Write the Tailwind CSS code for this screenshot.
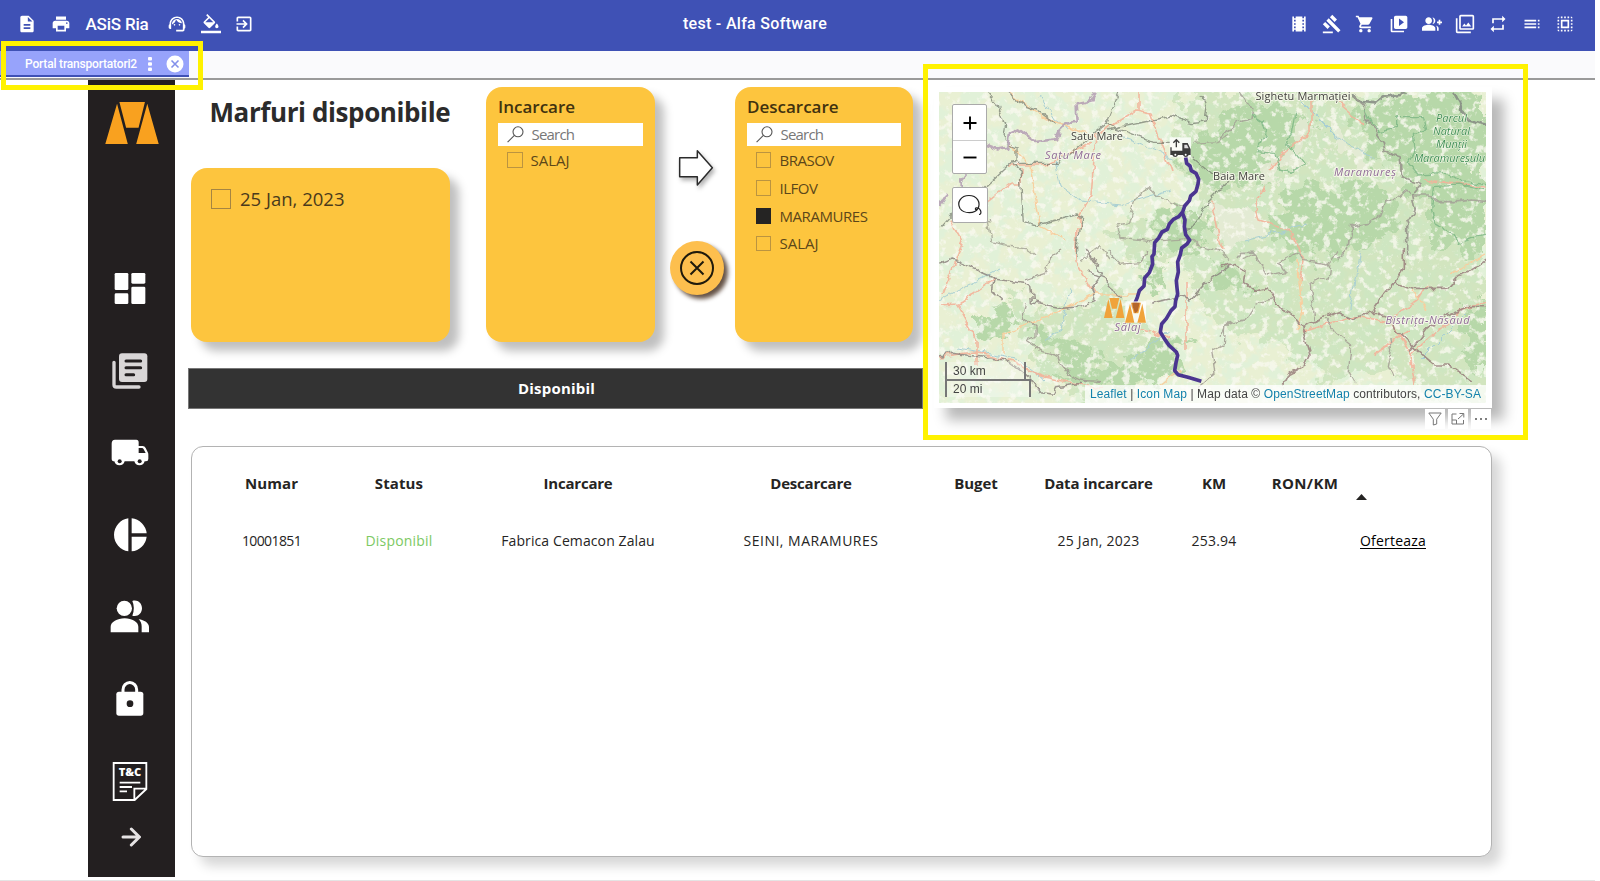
<!DOCTYPE html>
<html lang="ro">
<head>
<meta charset="utf-8">
<title>test - Alfa Software</title>
<script src="https://cdn.jsdelivr.net/npm/@tailwindcss/browser@4"></script>
</head>
<body class="relative h-[881px] w-[1600px] overflow-hidden bg-white font-['Open_Sans',sans-serif] text-[#252423]">

<!-- Application bar -->
<header class="flex h-[51px] w-[1595px] items-center bg-[#3f51b5] pt-[1px] pb-[4px] font-['Roboto',sans-serif] text-white">
  <div class="flex w-[500px] items-center pl-[17px]">
    <svg class="size-5" viewBox="0 0 24 24" fill="currentColor"><path d="M14 2H6c-1.1 0-2 .9-2 2v16c0 1.1.9 2 2 2h12c1.1 0 2-.9 2-2V8l-6-6zm2 16H8v-2h8v2zm0-4H8v-2h8v2zm-3-5V3.500L18.500 9H13z"/></svg>
    <svg class="ml-[13.500px] size-5" viewBox="0 0 24 24" fill="currentColor"><path d="M19 8H5c-1.660 0-3 1.340-3 3v6h4v4h12v-4h4v-6c0-1.660-1.340-3-3-3zm-3 11H8v-5h8v5zm3-7c-.550 0-1-.450-1-1s.450-1 1-1 1 .450 1 1-.450 1-1 1zm-1-9H6v4h12V3z"/></svg>
    <span class="ml-[15px] w-[64px] whitespace-nowrap text-[17px] leading-5 font-medium tracking-[-0.2px]">ASiS Ria</span>
    <svg class="ml-[17.500px] size-5" viewBox="0 0 24 24" fill="currentColor"><path d="M21 12.220C21 6.730 16.740 3 12 3c-4.690 0-9 3.650-9 9.280-.6.340-1 .980-1 1.720v2c0 1.100.9 2 2 2h1v-6.100c0-3.870 3.130-7 7-7s7 3.130 7 7V19h-8v2h8c1.100 0 2-.9 2-2v-1.220c.590-.310 1-.920 1-1.640v-2.300c0-.7-.410-1.310-1-1.620z"/><circle cx="9" cy="13" r="1"/><circle cx="15" cy="13" r="1"/><path d="M18 11.030C17.520 8.180 15.040 6 12.050 6c-3.030 0-6.290 2.510-6.030 6.450 2.470-1.010 4.330-3.210 4.860-5.890 1.310 2.630 4 4.440 7.120 4.470z"/></svg>
    <svg class="ml-[13.500px] size-5" viewBox="0 0 24 24" fill="currentColor"><path d="M16.560 8.940L7.620 0 6.210 1.410l2.380 2.380-5.150 5.150c-.590.590-.590 1.540 0 2.120l5.500 5.500c.290.290.680.440 1.060.440s.770-.150 1.060-.440l5.500-5.500c.590-.580.590-1.530 0-2.120zM5.210 10L10 5.210 14.790 10H5.210zM19 11.500s-2 2.170-2 3.500c0 1.100.9 2 2 2s2-.9 2-2c0-1.330-2-3.500-2-3.500zM0 20h24v3H0z"/></svg>
    <svg class="ml-[13px] size-5" viewBox="0 0 24 24" fill="currentColor"><path d="M10.090 15.590L11.500 17l5-5-5-5-1.410 1.410L12.670 11H3v2h9.670l-2.580 2.590zM19 3H5c-1.110 0-2 .9-2 2v4h2V5h14v14H5v-4H3v4c0 1.100.890 2 2 2h14c1.100 0 2-.9 2-2V5c0-1.100-.9-2-2-2z"/></svg>
  </div>
  <div class="w-[510px] text-center text-[16px] leading-5 font-medium tracking-[0.3px]">test - Alfa Software</div>
  <div class="flex w-[585px] items-center justify-end gap-[13.300px] pr-[20px]">
    <svg class="size-5" viewBox="0 0 24 24" fill="currentColor"><path d="M18 3v2h-2V3H8v2H6V3H4v18h2v-2h2v2h8v-2h2v2h2V3h-2zM8 17H6v-2h2v2zm0-4H6v-2h2v2zm0-4H6V7h2v2zm10 8h-2v-2h2v2zm0-4h-2v-2h2v2zm0-4h-2V7h2v2z"/></svg>
    <svg class="size-5" viewBox="0 0 24 24" fill="currentColor"><path d="M1 21h12v2H1zM5.245 8.070l2.830-2.827 14.140 14.142-2.828 2.828zM12.317 1l5.657 5.656-2.830 2.830-5.654-5.660zM3.825 9.485l5.657 5.657-2.828 2.828-5.657-5.657z"/></svg>
    <svg class="size-5" viewBox="0 0 24 24" fill="currentColor"><path d="M7 18c-1.100 0-1.990.9-1.990 2S5.900 22 7 22s2-.9 2-2-.9-2-2-2zM1 2v2h2l3.600 7.590-1.350 2.450c-.160.280-.250.610-.250.960 0 1.100.9 2 2 2h12v-2H7.420c-.140 0-.250-.110-.250-.250l.030-.120.9-1.630h7.450c.750 0 1.410-.410 1.750-1.030l3.580-6.490c.080-.140.120-.310.120-.480 0-.550-.450-1-1-1H5.210l-.940-2H1zm16 16c-1.100 0-1.990.9-1.990 2s.890 2 1.990 2 2-.9 2-2-.9-2-2-2z"/></svg>
    <svg class="size-5" viewBox="0 0 24 24" fill="currentColor"><path d="M4 6H2v14c0 1.100.9 2 2 2h14v-2H4V6zm16-4H8c-1.100 0-2 .9-2 2v12c0 1.100.9 2 2 2h12c1.100 0 2-.9 2-2V4c0-1.100-.9-2-2-2zm-8 12.500v-9l6 4.500-6 4.500z"/></svg>
    <svg class="size-5" viewBox="0 0 24 24" fill="currentColor"><path d="M22 9V7h-2v2h-2v2h2v2h2v-2h2V9zM8 12c2.210 0 4-1.790 4-4s-1.790-4-4-4-4 1.790-4 4 1.790 4 4 4zM8 13c-2.670 0-8 1.340-8 4v3h16v-3c0-2.660-5.330-4-8-4zM12.510 4.050C13.430 5.110 14 6.490 14 8s-.570 2.890-1.490 3.950C14.470 11.700 16 10.040 16 8s-1.530-3.700-3.490-3.950zM16.530 13.830C17.420 14.660 18 15.700 18 17v3h2v-3c0-1.450-1.590-2.510-3.470-3.170z"/></svg>
    <svg class="size-5" viewBox="0 0 24 24" fill="currentColor"><path d="M15.960 10.290l-2.750 3.540-1.960-2.360L8.500 15h11l-3.540-4.710zM3 5H1v16c0 1.100.9 2 2 2h16v-2H3V5zm18-4H7c-1.100 0-2 .9-2 2v14c0 1.100.9 2 2 2h14c1.100 0 2-.9 2-2V3c0-1.100-.9-2-2-2zm0 16H7V3h14v14z"/></svg>
    <svg class="size-5" viewBox="0 0 24 24" fill="currentColor"><path d="M7 7h10v3l4-4-4-4v3H5v6h2V7zm10 10H7v-3l-4 4 4 4v-3h12v-6h-2v4z"/></svg>
    <svg class="size-5" viewBox="0 0 24 24" fill="currentColor"><path d="M3 9h14V7H3v2zm0 4h14v-2H3v2zm0 4h14v-2H3v2zm16 0h2v-2h-2v2zm0-10v2h2V7h-2zm0 6h2v-2h-2v2z"/></svg>
    <svg class="size-5" viewBox="0 0 24 24" fill="currentColor"><path d="M3 5h2V3c-1.100 0-2 .9-2 2zm0 8h2v-2H3v2zm4 8h2v-2H7v2zM3 9h2V7H3v2zm10-6h-2v2h2V3zm6 0v2h2c0-1.100-.9-2-2-2zM5 21v-2H3c0 1.100.9 2 2 2zm-2-4h2v-2H3v2zM9 3H7v2h2V3zm2 18h2v-2h-2v2zm8-8h2v-2h-2v2zm0 8c1.100 0 2-.9 2-2h-2v2zm0-12h2V7h-2v2zm0 8h2v-2h-2v2zm-4 4h2v-2h-2v2zm0-16h2V3h-2v2zM7 17h10V7H7v10zm2-8h6v6H9V9z"/></svg>
  </div>
</header>

<!-- Open tabs -->
<nav class="flex h-[29px] w-[1595px] border-b-2 border-[#9a9a9a] bg-[#fafafc] font-['Roboto',sans-serif]">
  <div class="flex h-[26px] w-[189px] items-center border-b-2 border-[#3f51b5] bg-[#97a3fb] pt-[2px] pl-[25px] text-white">
    <span class="w-[113px] text-[12px] font-medium tracking-[-0.190px] whitespace-nowrap">Portal transportatori2</span>
    <svg class="ml-[9.500px] h-4 w-1" viewBox="0 0 4 16" fill="currentColor"><rect y="1" width="4" height="3.500" rx="1"/><rect y="6.200" width="4" height="3.500" rx="1"/><rect y="11.400" width="4" height="3.500" rx="1"/></svg>
    <svg class="ml-[14.500px] size-[18px]" viewBox="0 0 18 18"><circle cx="9" cy="9" r="8.500" fill="#fff"/><path d="M5.500 5.500l7 7M12.500 5.500l-7 7" stroke="#8390ea" stroke-width="1.600"/></svg>
  </div>
</nav>

<div class="flex h-[797px] pl-[88px]">
  <!-- Report side navigation -->
  <aside class="flex w-[87px] shrink-0 flex-col items-center bg-[#231f20] pt-[22px] text-white">
    <svg class="h-[42px] w-[54px]" viewBox="0 0 159 125" fill="#f9a11f"><path d="M42 0h76l-19 77H62zM35 5l32 120H0zM125 5l34 120H92z"/></svg>
    <div class="mt-[103px] mr-[3px] flex flex-col">
      <div class="grid h-[82.200px] place-items-center"><svg class="size-10" viewBox="91 84 120 120" fill="currentColor"><rect x="105" y="99" width="41" height="51" rx="4"/><rect x="155" y="99" width="42" height="32" rx="4"/><rect x="105" y="160" width="41" height="32" rx="4"/><rect x="155" y="140" width="42" height="52" rx="4"/></svg></div>
      <div class="grid h-[82.200px] place-items-center"><svg class="size-10" viewBox="91 329 120 120" fill="#d9d6d7"><rect x="118" y="339" width="85" height="86" rx="9"/><path d="M103 366v67q0 7 7 7h68" fill="none" stroke="#d9d6d7" stroke-width="10" stroke-linecap="round"/><path d="M139 362h44M139 382h44M139 403h23" stroke="#231f20" stroke-width="9" stroke-linecap="round"/></svg></div>
      <div class="grid h-[82.200px] place-items-center"><svg class="size-10" viewBox="91 575 120 120" fill="currentColor"><path d="M106 598h64q7 0 7 8v11h12q6 0 9 6l7 14q1 2 1 6v13q0 7-7 7h-4a16 16 0 0 1-31 0h-29a16 16 0 0 1-31 0q-8 0-8-8v-45q0-12 10-12z"/><path d="M177 623h10q3 0 5 4l6 11h-21z" fill="#231f20"/><circle cx="120" cy="663" r="6" fill="#231f20"/><circle cx="180" cy="663" r="6" fill="#231f20"/></svg></div>
      <div class="grid h-[82.200px] place-items-center"><svg class="size-10" viewBox="91 824 120 120" fill="currentColor"><path d="M146 834v99a50 50 0 0 1 0-99zM156 834a50 50 0 0 1 45 45h-45zM156 889h45a50 50 0 0 1-45 44z"/></svg></div>
      <div class="grid h-[82.200px] place-items-center"><svg class="size-10" viewBox="91 110 120 120" fill="currentColor"><circle cx="134" cy="144" r="23"/><path d="M93 216v-17c0-14 20-25 42-25s41 11 41 25v17zM158 122q9 20 0 44c15 5 29-6 29-22s-14-27-29-22zM177 177c17 2 31 11 31 23v16h-22v-17c0-9-3-16-9-22z"/></svg></div>
      <div class="grid h-[82.200px] place-items-center"><svg class="size-10" viewBox="91 357 120 120" fill="currentColor"><path d="M130 400v-11a20 21 0 0 1 41 0v11" fill="none" stroke="currentColor" stroke-width="9"/><rect x="110" y="395" width="81" height="72" rx="8"/><circle cx="151" cy="431" r="10" fill="#231f20"/></svg></div>
      <div class="grid h-[82.200px] place-items-center"><svg class="size-10" viewBox="91 602 120 120" fill="none" stroke="currentColor" stroke-width="5.500"><path d="M102 608h98v78l-35 33h-63zM199 685h-35v34M120 667h62M120 680h37M120 693h22"/><text x="117" y="648" textLength="68" lengthAdjust="spacingAndGlyphs" font-family="Open Sans" font-weight="800" font-size="31" fill="currentColor" stroke="none">T&amp;C</text></svg></div>
    </div>
    <svg class="mt-[5px] mr-[2px] size-[20px]" viewBox="0 0 60 60" fill="none" stroke="#e6e3e4" stroke-width="9" stroke-linecap="round"><path d="M6 30h46M31 6l24 24-24 24"/></svg>
  </aside>

  <main class="flex grow flex-col">
    <div class="flex h-[366px] shrink-0">
      <div class="flex w-[748px] flex-col pt-[7px] pl-[13px]">
        <div class="flex h-[255px] pl-[3px]">
          <section class="flex w-[259px] flex-col">
            <h1 class="pt-[9px] pl-[18.500px] text-[26px] leading-8 font-bold tracking-[-0.400px] whitespace-nowrap text-[#2b2b2b]">Marfuri disponibile</h1>
            <div class="mt-auto h-[174px] rounded-[16px] bg-[#fdc53e] pt-[18.500px] pl-[20px] shadow-[9px_9px_10px_rgba(0,0,0,0.25)]">
              <label class="flex items-center gap-[9px] text-[18.500px] leading-6 text-[#4a3a1c]"><span class="size-[20px] border border-[#a58542]"></span>25 Jan, 2023</label>
            </div>
          </section>

          <section class="ml-[36px] w-[169px] rounded-[16px] bg-[#fdc53e] pt-[9.500px] pl-[12px] shadow-[9px_9px_10px_rgba(0,0,0,0.25)]">
            <h2 class="text-[17px] leading-5 font-semibold text-[#41320f]">Incarcare</h2>
            <div class="mt-[6.500px] flex h-[23px] w-[145px] items-center gap-[8px] bg-white pl-[8.500px] text-[15px] tracking-[-0.800px] text-[#777]">
              <svg class="h-[17px] w-[17px]" viewBox="0 0 17 17" fill="none" stroke="#555" stroke-width="1.100"><circle cx="11" cy="5.800" r="5"/><path d="M7.400 9.400L.600 16.200"/></svg>Search
            </div>
            <label class="flex h-[28px] items-center gap-[8px] pl-[9px] text-[15px] text-[#5c4719]"><span class="size-[15.500px] border border-[#bb9440]"></span>SALAJ</label>
          </section>

          <div class="flex w-[80px] flex-col items-center pt-[61px]">
            <svg class="ml-[6px] h-[44px] w-[44px] drop-shadow-[2px_3px_2px_rgba(0,0,0,0.3)]" viewBox="108 218 132 132" fill="#fff" stroke="#2b2b2b" stroke-width="4.500" stroke-linejoin="round"><path d="M119 247h53v-21l45 51-45 52v-25h-53z"/></svg>
            <div class="mt-[49px] ml-[3px] grid size-[54px] place-items-center rounded-full bg-[#fdbf4e] shadow-[4px_4px_4px_rgba(50,25,10,0.750)]">
              <svg class="size-[34px]" viewBox="0 0 34 34" fill="none" stroke="#1f1a0c" stroke-width="2"><circle cx="17" cy="17" r="16"/><path d="M10.500 10.500l13 13M23.500 10.500l-13 13"/></svg>
            </div>
          </div>

          <section class="w-[178px] rounded-[16px] bg-[#fdc53e] pt-[9.500px] pl-[12px] shadow-[9px_9px_10px_rgba(0,0,0,0.25)]">
            <h2 class="text-[17px] leading-5 font-semibold text-[#41320f]">Descarcare</h2>
            <div class="mt-[6.500px] flex h-[23px] w-[154px] items-center gap-[7.500px] bg-white pl-[9px] text-[15px] tracking-[-0.800px] text-[#777]">
              <svg class="h-[17px] w-[17px]" viewBox="0 0 17 17" fill="none" stroke="#555" stroke-width="1.100"><circle cx="11" cy="5.800" r="5"/><path d="M7.400 9.400L.600 16.200"/></svg>Search
            </div>
            <div class="flex flex-col pl-[8.500px] text-[15px] text-[#5c4719]">
              <label class="flex h-[28px] items-center gap-[8.500px] tracking-[-0.500px]"><span class="size-[15.500px] border border-[#bb9440]"></span>BRASOV</label>
              <label class="flex h-[28px] items-center gap-[8.500px] tracking-[-0.500px]"><span class="size-[15.500px] border border-[#bb9440]"></span>ILFOV</label>
              <label class="flex h-[28px] items-center gap-[8.500px] tracking-[-0.440px]"><span class="size-[15.500px] bg-[#252423]"></span>MARAMURES</label>
              <label class="flex h-[27px] items-center gap-[8.500px]"><span class="size-[15.500px] border border-[#bb9440]"></span>SALAJ</label>
            </div>
          </section>
        </div>

        <div class="mt-[26px] flex h-[41px] items-center justify-center border border-[#777] bg-[#333] pl-[2px] text-[15px] font-bold tracking-[0.200px] text-white">Disponibil</div>
      </div>

      <!-- Map visual -->
      <section class="ml-[11px] w-[558px] pt-[7px]">
        <div class="relative h-[321px] border-[5px] border-white bg-white shadow-[12px_12px_12px_rgba(0,0,0,0.28)]">
          <svg class="block h-[311px] w-[547px]" viewBox="939 92 547 311">
            <defs>
              <filter id="grain" x="0" y="0" width="100%" height="100%">
                <feTurbulence type="fractalNoise" baseFrequency="0.055" numOctaves="5" seed="8"/>
                <feColorMatrix values="0 0 0 0 0.750  0 0 0 0 0.880  0 0 0 0 0.690  6 0 0 0 -2.600"/>
              </filter>
              <filter id="fields" x="0" y="0" width="100%" height="100%">
                <feTurbulence type="fractalNoise" baseFrequency="0.130" numOctaves="4" seed="21"/>
                <feColorMatrix values="0 0 0 0 0.945  0 0 0 0 0.945  0 0 0 0 0.860  0 6 0 0 -3.200"/>
              </filter>
              <filter id="rough" x="-10%" y="-10%" width="120%" height="120%">
                <feTurbulence type="fractalNoise" baseFrequency="0.050" numOctaves="5" seed="3"/>
                <feDisplacementMap in="SourceGraphic" scale="45" xChannelSelector="R" yChannelSelector="G"/>
                <feGaussianBlur stdDeviation="0.700"/>
              </filter>
              <filter id="wobble" x="-5%" y="-5%" width="110%" height="110%">
                <feTurbulence type="fractalNoise" baseFrequency="0.090" numOctaves="3" seed="5"/>
                <feDisplacementMap in="SourceGraphic" scale="8" xChannelSelector="R" yChannelSelector="G"/>
              </filter>
            </defs>
            <rect x="939" y="92" width="547" height="311" fill="#e9f0d3"/>
            <rect x="939" y="92" width="547" height="311" filter="url(#grain)"/>
            <g fill="#c3dfb3" opacity=".6" filter="url(#rough)">
              <path d="M1180 92h306v311h-60l-40-40-60 20-50-40-60-10-30-60 20-60-30-60zM1000 290l60 20 60-20 30 40-10 73h-50l-60-50zM1110 230l60-20 20 40-50 20z"/>
            </g>
            <g fill="#b7d8a9" filter="url(#rough)">
              <path d="M1180 155l50-45 50-5 40 20-15 30-60 30-45-5zM1285 190l80-10 35 30-25 35-40 15-50-10-15-30zM1355 110l70-20 61 5v100l-60 10-25-40-30-10zM1430 185l56 10v60l-56-10zM1150 220l45-15 20 30-40 20zM1205 265l35-5 10 30-35 5zM965 320l40-10 15 20-40 10zM1030 325l60 25 40 35-20 15-55-45zM1055 375l60-5 50-35 30 5-20 30-60 25zM1465 305l21-5v70l-21-15zM1145 260l30 5-10 25-25-5z"/>
            </g>
            <g fill="#e9edd9" opacity=".8" filter="url(#rough)">
              <path d="M1300 118l20 10-20 35-25 20-15-10 25-25zM1330 125l30 25 15 15-10 5-35-25zM1215 205l50 10-10 35-40-15z"/>
            </g>
            <rect x="939" y="92" width="547" height="311" opacity=".8" filter="url(#fields)"/>
            <g filter="url(#wobble)" fill="none" stroke-linejoin="round">
              <!-- waterways -->
              <g stroke="#a9cfd3" stroke-width="1">
                <path d="M1040 95l15 25 15 10M1055 160l5 25 20 15 40 5 50-15M1115 135l40 15 20 10M1300 100l35 35 40 25M939 300l60-30M1070 290l-10 40-15 10M1245 240l60-15M1360 250l-10 60M1420 360l25-25 20-20M960 348l60 12 25 20M1170 330l-40 30"/>
              </g>
              <!-- main roads -->
              <g stroke="#f3b39a" stroke-width="1.600" opacity=".9">
                <path d="M1096 135l40-25 15 3 20 60M1138 92v18M1096 135l-5 60-12 20v15M1009 165h36l45-22M1021 168v15h-10l-25 20-35 18 12 23-20 50M1077 230l-2 30 20 35M939 357l35-5 40 10 30 15 60 12M939 305l20-1 35-24M957 305l20 35v25M1140 328l30 10M1265 185l-10 20 5 15 30 10 15 30-5 20M1212 200l10 50M1302 332l50-16 35 5 30-20 10-15M1409 330l-35 25M1390 320l20 35 5 30M1425 180l62 8M1311 100v30l-30 25-10 15M1335 100l30 25M1186 280v70M1410 355l50-45 27-8"/>
              </g>
              <g stroke="#f8cf9f" stroke-width="1.400">
                <path d="M1008 92l35 25 50 20M1010 145l20 20 10 60 25 15M1003 335l60-25 30-15h45M1004 335v20M1297 260l5 50-5 20M1412 290l15 20M1450 275l35-20M1160 385l20-15"/>
              </g>
            </g>
            <!-- railways and county boundaries -->
            <g filter="url(#wobble)" opacity=".85">
            <g transform="translate(920 60) scale(.33333)" fill="none" stroke-linejoin="round">
              <path d="M197 95l35 40 25 60-5 30 15 30 24 10v40h-15l-78 72-90 75-45 50M291 310h120l60-45 90-75 37-95M561 190l30 15 110 42h50M561 210l195-42 60 20 40-5 5-45-15-30M275 310l25 20 10 155 40 10 120-30 15 5-15 80 0 40M260 95l60 45 30 10 55 40M815 290l60 50 55 5M930 360l-65 65-60 90" stroke="#777b70" stroke-width="4" opacity=".85"/>
              <path d="M530 95l-15 25-48 10 3 55-45 10-20 40-60 8-50-35-25 10-5 45-30 5-40-15M140 340l-15 20v40M80 405l-20 30" stroke="#b39cb3" stroke-width="8"/>
              <path d="M205 480l10 65 40 10 60 5 30 25M590 500l35-10 20-70 40-40 25 25 35 15 50 25M590 500l10 35 90 10 120-10 20 20 60 15 40 25M820 250l70-5 40-20M480 600l60-40 30 40" stroke="#a6a596" stroke-width="4"/>
            </g>
            <g transform="translate(1220 60) scale(.33333)" fill="none" stroke-linejoin="round">
              <path d="M395 95l20 30 50 5 30-20 40-5 15-10M700 95l20 35 5 30 20 20 60 15" stroke="#858a82" stroke-width="8"/>
              <path d="M400 105l30 30 5 45 30 30 25 35 5 30 45 15 5 60 55 22-25 30 10 50-25 40 0 100" stroke="#948f88" stroke-width="5"/>
              <path d="M570 400l-20-5-30 25-20 5-15 40-40 25-50 10-10 60-30 40M575 405h50l30 20 60 0 40-5 50 5M60 95l35 50-5 30-40 15-50 45M45 600l15-20 40 0 20 20" stroke="#a3a096" stroke-width="5"/>
              <path d="M90 160l40 25 10 30-35 60 60 5 15 50 30 10 40-25-30-40-20-20 15-40 10-60M430 150l20 40 30 25 50-10 0-35 80 0 10 40-40 10 5 50-20 35 30 40 90-5 40 25 90 10M640 380l-5 70 10 40 50 30 20 30 50-20 45-10M640 380l80-5 90 20" stroke="#7fb886" stroke-width="4"/>
            </g>
            <g transform="translate(920 250) scale(.33333)" fill="none" stroke-linejoin="round">
              <path d="M47 50l50-20 50 20 60 25 10 15 115 15 5 50 95 20 50-5 40-15-10-40 35-45-45-70M505 65l50 20 15 30 35 25M220 85l-5 35 33 30M690 160l90-20 30 10 50-55 70-50M47 320l50-10 160 20 70 50 30 45 40 5 10-20 80-10" stroke="#8e8580" stroke-width="4.500"/>
              <path d="M320 160l-10 45 35 25 0 30-25 10 50 35 50 15 20 50 40 20 60 5M375 70l20-50 25-20M375 70l-60 20M560 0l40 40 60-5 30-35M930 225l-15 0-5 60-35 15 10 70-50 45" stroke="#a09a90" stroke-width="4"/>
            </g>
            <g transform="translate(1220 250) scale(.33333)" fill="none" stroke-linejoin="round">
              <path d="M0 50l30-10 45 25-5 35 35 25 35-10 25 50 50 25 30 40 110-45 40 20 40-15h45l30 10 15 40 60 55 60 50 40 0 70 50M245 230l25 85-15 30-45 25-20 40M455 190l20-30 50-65 25-40V0M525 95l55 20 100 0 30-35 40-15 60-40M565 310l60-80 50-30 70-30h65" stroke="#9a807e" stroke-width="5"/>
              <path d="M65 30l40-15 40 60 50-10-20-30 60-30 20 30 70 10 30-45M330 40l-5 40-55 20 15 110M0 260l15-35 60-15 30-50 50-10M320 210l30 40 45 35-10 80 20 35M510 270l5 30-10 50 15 30" stroke="#a49d94" stroke-width="4"/>
            </g>
            </g>
            <!-- place names -->
            <g font-family="Open Sans, sans-serif" font-size="11" stroke="#f4f7e8" stroke-width="2" paint-order="stroke" stroke-linejoin="round" fill="#41413d">
              <text x="1071" y="140" textLength="52">Satu Mare</text>
              <text x="1213" y="180" textLength="52">Baia Mare</text>
              <text x="1255.500" y="99.500" textLength="95">Sighetu Marmației</text>
              <g font-style="italic" fill="#8f6c96">
                <text x="1045" y="158.500" textLength="56">Satu Mare</text>
                <text x="1334" y="175.500" textLength="62">Maramureș</text>
                <text x="1385.500" y="323.500" textLength="84">Bistrița-Năsăud</text>
                <text x="1114.500" y="330.500" textLength="26">Sălaj</text>
              </g>
              <g font-style="italic" fill="#3f8f55" stroke-width="1">
                <text x="1436" y="122" textLength="31">Parcul</text>
                <text x="1433" y="135" textLength="37">Natural</text>
                <text x="1436" y="148" textLength="31">Munții</text>
                <text x="1414" y="161.500" textLength="71">Maramureșulu</text>
              </g>
            </g>
            <!-- planned routes -->
            <g transform="translate(920 60) scale(.33333)" fill="none" stroke="#4a3590" stroke-width="11" stroke-linejoin="round">
              <path d="M797 292l3 18 10 8 4 14 14 8 8 18-2 14-6 22-16 14-4 14-14 16-6 18-12 14-16 8-12 14-6 16-16 8-10 18-12 14-2 34-6 8 2 22-10 26-14 16-2 24-14 14-6 20-10 24-8 6"/>
              <path d="M787 458l8 22-2 20 4 24 12 16-8 12-16 12-4 20-8 22 2 30-6 26 2 22 2 18-6 20-2 18-12 12-14 24-14 16-4 24 12 20 14 20 22 20 4 10-5 22-4 24 10 12 30 8 40 12"/>
            </g>
            <!-- markers -->
            <g transform="translate(920 60) scale(.33333)">
              <rect x="749" y="232" width="64" height="60" fill="#fff" opacity=".8"/>
              <path d="M751 262h4v10h32v-23h16l9 19v17h-6a9 9 0 0 1-17 0h-15a9 9 0 0 1-17 0h-6z" fill="#3b3b3b"/><path d="M793 254h8l5 11h-13z" fill="#ddd"/><circle cx="766" cy="284" r="3" fill="#fff"/><circle cx="797" cy="284" r="3" fill="#fff"/>
              <path d="M769 262v-20M760 248l9-9 9 9" stroke="#3b3b3b" stroke-width="4" fill="none"/>
            </g>
            <g transform="translate(920 250) scale(.33333)" fill="#f0a33b">
              <rect x="616" y="154" width="62" height="64" fill="#fff" opacity=".8"/>
              <path d="M568 144h30l-8 32h-14zM565 147l13 57h-26zM602 147l11 57h-26z"/>
              <path d="M633 158h30l-8 32h-14zM630 161l13 57h-28zM667 161l11 57h-26z"/>
              <path d="M637 158h22l-6 26-8 6-6-18z" fill="#b4662c"/>
            </g>
          </svg>

          <div class="absolute top-[12px] left-[13px] flex h-[70px] w-[35px] flex-col rounded-[2px] border border-[#aaa] bg-white">
            <div class="grid grow place-items-center border-b border-[#ccc] pt-[2px]"><svg class="size-[14px]" viewBox="0 0 14 14" stroke="#000" stroke-width="1.900"><path d="M7 .500v13M.500 7h13"/></svg></div>
            <div class="grid grow place-items-center"><svg class="size-[14px]" viewBox="0 0 14 14" stroke="#000" stroke-width="1.900"><path d="M.500 7.500h13"/></svg></div>
          </div>
          <div class="absolute top-[95px] left-[13px] grid size-[36px] place-items-center rounded-[2px] border border-[#aaa] bg-white">
            <svg class="size-[26px]" viewBox="0 0 26 26" fill="none" stroke="#222" stroke-width="1.200"><path d="M21 16.500C18 22 7 22 3 16.500-.500 10 4 3.500 12 3.500S24 10 21 16.500c-1 1.500-3 1.500-2.500 0s4-.500 5 2 0 4-1.500 4"/></svg>
          </div>
          <div class="absolute bottom-[6px] left-[6px] flex flex-col font-['Liberation_Sans',sans-serif] text-[12px] text-[#444]">
            <div class="h-[17px] w-[81px] border-x-2 border-[#777] bg-white/30 pl-[6px] leading-[19px]">30 km</div>
            <div class="h-[18px] w-[86px] border-x-2 border-t-2 border-[#777] bg-white/30 pl-[6px] leading-[17px]">20 mi</div>
          </div>
          <div class="absolute right-0 bottom-0 h-[18px] bg-white/75 pr-[6px] pl-[5px] font-['Liberation_Sans',sans-serif] text-[12px] leading-[19px] tracking-[0.100px] whitespace-nowrap text-[#444]"><span class="text-[#1482ac]">Leaflet</span> | <span class="text-[#1482ac]">Icon Map</span> | Map data © <span class="text-[#1482ac]">OpenStreetMap</span> contributors, <span class="text-[#1482ac]">CC-BY-SA</span></div>
        </div>
        <div class="relative flex justify-end gap-[2.500px] pt-[1px] pr-px">
          <div class="grid h-[20px] w-[20.500px] place-items-center bg-white"><svg class="size-[14px]" viewBox="0 0 14 14" fill="none" stroke="#777"><path d="M.800 1h12.400L8.700 7.200V12L5.300 13V7.200z"/></svg></div>
          <div class="grid h-[20px] w-[20.500px] place-items-center bg-white"><svg class="size-[14px]" viewBox="0 0 14 14" fill="none" stroke="#777"><path d="M5.500 2H1v10h11.500V8M1 8h4.500v4M7 7l5.500-5M8.500 1.500h4.300v4"/></svg></div>
          <div class="grid h-[20px] w-[20.500px] place-items-center bg-white"><svg class="size-[14px]" viewBox="0 0 14 14" fill="#555"><circle cx="2" cy="7" r="1"/><circle cx="7" cy="7" r="1"/><circle cx="12" cy="7" r="1"/></svg></div>
        </div>
      </section>
    </div>

    <!-- Available loads -->
    <section class="ml-[16px] h-[411px] w-[1301px] rounded-[12px] border border-[#b3b3b3] bg-white pt-[20px] pl-[33px] shadow-[9px_9px_12px_rgba(0,0,0,0.16)]">
      <div class="grid h-[30px] grid-cols-[93px_162px_196px_270px_60px_185px_46px_136px_40px] items-start pt-[6px] text-center text-[15px] leading-5 font-bold whitespace-nowrap">
        <div class="tracking-[0.100px]">Numar</div><div class="tracking-[0.100px]">Status</div><div class="tracking-[-0.200px]">Incarcare</div><div class="tracking-[-0.200px]">Descarcare</div><div class="tracking-[-0.100px]">Buget</div><div class="tracking-[-0.100px]">Data incarcare</div><div>KM</div><div class="tracking-[0.400px]">RON/KM</div>
        <svg class="mt-[21px] -ml-[17px] h-[6px] w-[11px]" viewBox="0 0 11 6"><path d="M5.500 0L11 6H0z" fill="#252423"/></svg>
      </div>
      <div class="mt-[29px] grid h-[30px] grid-cols-[93px_162px_196px_270px_60px_185px_46px_136px_40px] items-center text-center text-[14px] leading-5 whitespace-nowrap">
        <div class="tracking-[-0.600px]">10001851</div><div class="tracking-[0.200px] text-[#7cc963]">Disponibil</div><div class="tracking-[0.100px]">Fabrica Cemacon Zalau</div><div class="tracking-[0.500px]">SEINI, MARAMURES</div><div></div><div class="flex justify-center"><span class="tracking-[0.250px]">25 Jan, 2023</span></div><div class="tracking-[0.200px]">253.94</div><div></div>
        <div class="flex justify-center"><a class="tracking-[0.200px] text-black underline underline-offset-2">Oferteaza</a></div>
      </div>
    </section>
  </main>
</div>
<div class="mt-[3px] h-px w-[1595px] bg-[#e4e4e4]"></div>

<!-- Highlight frames -->
<div class="absolute top-[41px] left-[1px] h-[49px] w-[202px] border-[5px] border-[#fff200]"></div>
<div class="absolute top-[64px] left-[923px] h-[376px] w-[605px] border-[5px] border-[#fff200]"></div>
</body>
</html>
